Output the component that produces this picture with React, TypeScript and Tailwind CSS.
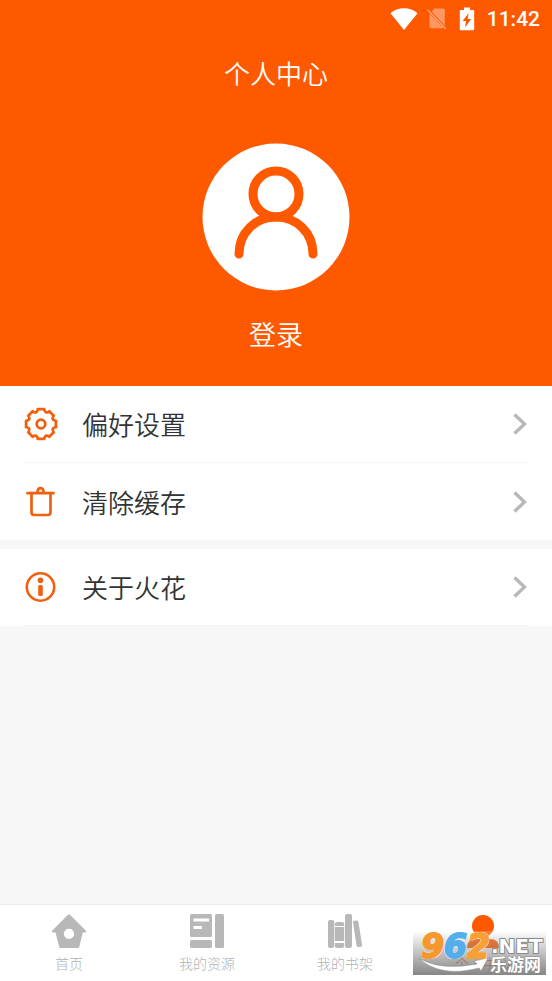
import { ReactNode } from 'react'

function WifiIcon() {
    return (
        <svg width="28" height="22" viewBox="0 0 28 22" fill="#fff" aria-hidden="true">
            <path d="M14 22L0.5 5.2C4.2 2 8.8 0.3 14 0.3S23.8 2 27.5 5.2z" />
        </svg>
    )
}

function NoSimIcon() {
    return (
        <svg width="20" height="22" viewBox="0 0 20 22" aria-hidden="true">
            <path d="M7.5 0.5H16Q17.8 0.5 17.8 2.3V17.500L4.800 3.400zM2.5 5.500L16.800 20.2H4.3Q2.5 20.2 2.5 18.4z" fill="#ff9863" />
            <path d="M0.800 2L18.800 20.8" stroke="#ff9863" strokeWidth="1.8" />
        </svg>
    )
}

function BatteryIcon() {
    return (
        <svg width="16" height="24" viewBox="0 0 16 24" aria-hidden="true">
            <path d="M5 0.5H11V3H14Q15.2 3 15.2 4.2V22Q15.2 23.2 14 23.2H2Q0.8 23.2 0.8 22V4.2Q0.8 3 2 3H5z" fill="#fff" />
            <path d="M9.6 6L3.6 14H7L6 20.6L12.3 12H8.6z" fill="#ff5900" />
        </svg>
    )
}

function AvatarIcon() {
    return (
        <svg width="148" height="148" viewBox="0 0 148 148" fill="none" stroke="#ff5900" strokeWidth="9" strokeLinecap="round" aria-hidden="true">
            <circle cx="74" cy="74" r="73.5" fill="#fff" stroke="none" />
            <circle cx="74" cy="51" r="23" />
            <path d="M37 111C37 89.5 53.5 74 74 74S111 89.5 111 111" />
        </svg>
    )
}

function GearIcon() {
    return (
        <svg width="34" height="34" viewBox="0 0 34 34" fill="none" stroke="#f0600f" strokeWidth="2.8" strokeLinejoin="round" aria-hidden="true">
            <path d="M31.900 20.200Q26.700 21 29.700 25.300L25.300 29.700Q21 26.700 20.200 31.900H13.800Q13 26.700 8.700 29.700L4.300 25.300Q7.300 21 2.100 20.200V13.800Q7.300 13 4.300 8.700L8.700 4.300Q13 7.300 13.800 2.100H20.200Q21 7.300 25.300 4.300L29.700 8.700Q26.700 13 31.900 13.800z" />
            <circle cx="17" cy="17" r="4.300" />
        </svg>
    )
}

function TrashIcon() {
    return (
        <svg width="34" height="34" viewBox="0 0 34 34" fill="none" stroke="#f0600f" strokeWidth="2.7" strokeLinecap="round" aria-hidden="true">
            <path d="M3.500 8.200H29.500" />
            <path d="M7.500 8.200V27Q7.500 30 10 30H24Q26.500 30 26.500 27V8.200" />
            <path d="M13.600 7.500V6A2.900 2.900 0 0 1 19.400 6V7.500" />
        </svg>
    )
}

function InfoIcon() {
    return (
        <svg width="34" height="34" viewBox="0 0 34 34" aria-hidden="true">
            <circle cx="16.500" cy="17" r="13.700" fill="none" stroke="#f0600f" strokeWidth="2.600" />
            <circle cx="16.500" cy="10.300" r="2.800" fill="#f0600f" />
            <rect x="14.200" y="15" width="4.600" height="11" rx="1.500" fill="#f0600f" />
        </svg>
    )
}

function ChevronIcon() {
    return (
        <svg width="16" height="24" viewBox="0 0 16 24" fill="none" stroke="#b8b8b8" strokeWidth="3.400" aria-hidden="true">
            <path d="M2.500 2.500L12.500 12L2.500 21.500" />
        </svg>
    )
}

function HomeIcon() {
    return (
        <svg width="36" height="36" viewBox="0 0 36 36" fill="#b8b8b8" aria-hidden="true">
            <path fillRule="evenodd" d="M17 1.800Q18 0.900 19 1.800L35.200 18Q35.600 19.200 34.500 19.400H31.800L28.300 34Q28 35 27 35H9.500Q8.500 35 8.200 34L4.500 19.400H1.500Q0.400 19.200 0.800 18zM18 15.800A5.100 5.100 0 1 0 18 26A5.100 5.100 0 1 0 18 15.800z" />
        </svg>
    )
}

function ResourceIcon() {
    return (
        <svg width="36" height="36" viewBox="0 0 36 36" fill="#b8b8b8" aria-hidden="true">
            <rect x="1" y="1" width="22" height="23" rx="1.500" />
            <rect x="1" y="27" width="22" height="8" rx="1.500" />
            <rect x="26" y="1" width="9" height="34" rx="1.500" />
            <path d="M4.500 7H20M4.500 14.500H13" stroke="#fff" strokeWidth="3" />
        </svg>
    )
}

function ShelfIcon() {
    return (
        <svg width="36" height="36" viewBox="0 0 36 36" fill="#b8b8b8" aria-hidden="true">
            <rect x="1" y="7" width="6.200" height="28" rx="2" />
            <path d="M7.800 13V10.500Q8 9 10 9H15Q17 9 17.200 10.500V13zM7.800 14H17.200V28H7.800zM7.800 30H17.200V33Q17 35 15 35H10Q8 35 7.800 33z" />
            <rect x="18" y="1" width="7" height="34" rx="2" />
            <path d="M26 9.500Q25.800 8 27.300 7.800L29.700 7.400Q31.200 7.200 31.400 8.700L35.100 32Q35.300 33.500 33.800 33.700L31.300 34.100Q29.800 34.300 29.600 32.800z" />
        </svg>
    )
}

function UserIcon() {
    return (
        <svg width="36" height="36" viewBox="0 0 36 36" fill="#ff5900" aria-hidden="true">
            <circle cx="18" cy="13" r="11" />
            <path d="M2 35Q2 26 11 26H25Q34 26 34 35z" />
        </svg>
    )
}

function MenuRow({ icon, label, line }: { icon: ReactNode; label: string; line?: boolean }) {
    return (
        <li className="bg-white px-6">
            <button type="button" className={line ? 'flex h-[77px] w-full items-center border-b border-[#f4f4f4] text-left' : 'flex h-[77px] w-full items-center text-left'}>
                {icon}
                <span className="ml-6 flex-1 text-[26px] leading-9 font-[350] text-[#333]">{label}</span>
                <ChevronIcon />
            </button>
        </li>
    )
}

function NavItem({ icon, label, active }: { icon: ReactNode; label: string; active?: boolean }) {
    return (
        <a href="#" className={active ? 'flex flex-1 flex-col items-center pt-2 text-[#ff5900]' : 'flex flex-1 flex-col items-center pt-2 text-[#b2b2b2]'}>
            {icon}
            <span className="mt-1 text-[14px] leading-5 font-light">{label}</span>
        </a>
    )
}

function SiteBadge() {
    return (
        <div className="pointer-events-none absolute right-[6px] bottom-[6px] h-[44px] w-[133px] bg-linear-to-b from-white/20 to-[#686868]/80 font-['DejaVu_Sans'] font-bold">
            <svg className="absolute top-[27px] left-[6px]" width="72" height="16" viewBox="0 0 72 16" aria-hidden="true">
                <path d="M0 0.500Q22 13 58 6L55 3L69 0L62 13L60 10Q22 20 0 0.500z" fill="#fff" stroke="#888" strokeWidth="0.500" />
            </svg>
            <span className="absolute -top-px left-[8px] flex text-[33px] leading-[34px] italic [-webkit-text-stroke:2px_currentColor] [text-shadow:1px_1px_white,-1px_1px_white,1px_-1px_white,-1px_-1px_white]">
                <span className="text-[#f7982e]">9</span>
                <span className="text-[#55aeea]">6</span>
                <span className="text-[#f7a038]">2</span>
            </span>
            <span className="absolute top-[4px] left-[78px] text-[20px] leading-[22px] text-white [-webkit-text-stroke:2px_#888] [paint-order:stroke_fill]">.NET</span>
            <span className="absolute top-[23px] left-[77px] font-['Noto_Sans_CJK_SC'] text-[17px] leading-[20px] whitespace-nowrap text-white [-webkit-text-stroke:1px_#888] [paint-order:stroke_fill]">乐游网</span>
        </div>
    )
}

export default function App() {
    return (
        <div className="relative flex min-h-screen w-full flex-col bg-[#f7f7f7] font-['Noto_Sans_CJK_SC',sans-serif]">
            <header className="flex flex-col items-center bg-[#ff5900] pb-8 text-white">
                <div className="flex h-[37px] w-full items-center justify-end pr-3">
                    <WifiIcon />
                    <span className="ml-[9px]"><NoSimIcon /></span>
                    <span className="ml-3"><BatteryIcon /></span>
                    <time className="ml-3 font-['Roboto'] text-[21px] leading-6 font-medium">11:42</time>
                </div>
                <h1 className="py-4 text-[26px] leading-10 font-[350]">个人中心</h1>
                <button type="button" className="mt-[34px] flex flex-col items-center">
                    <AvatarIcon />
                    <span className="mt-[23px] text-[27px] leading-10 font-[350]">登录</span>
                </button>
            </header>

            <main className="flex-1">
                <ul>
                    <MenuRow icon={<GearIcon />} label="偏好设置" line />
                    <MenuRow icon={<TrashIcon />} label="清除缓存" />
                </ul>
                <ul className="mt-[9px]">
                    <MenuRow icon={<InfoIcon />} label="关于火花" line />
                </ul>
            </main>

            <nav className="flex h-[77px] border-t border-[#ebebeb] bg-white">
                <NavItem icon={<HomeIcon />} label="首页" />
                <NavItem icon={<ResourceIcon />} label="我的资源" />
                <NavItem icon={<ShelfIcon />} label="我的书架" />
                <NavItem icon={<UserIcon />} label="个人中心" active />
            </nav>
            <SiteBadge />
        </div>
    )
}
